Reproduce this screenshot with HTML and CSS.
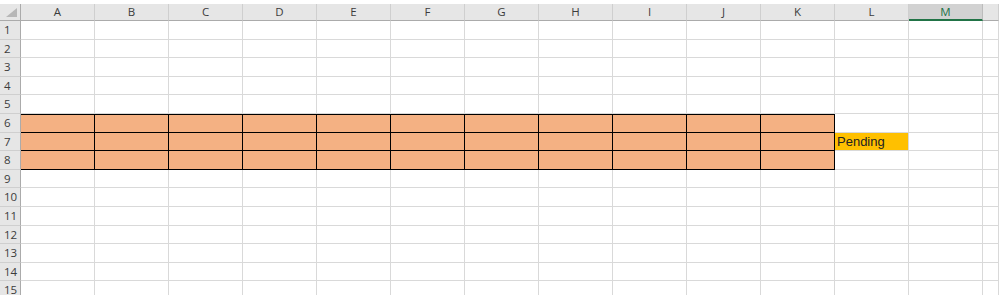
FILE: index.html
```html
<!DOCTYPE html>
<html lang="en">
<head>
    <meta charset="UTF-8">
    <title>Book1 - Excel</title>
    <link rel="stylesheet" href="styles.css">
</head>
<body>

<div id="sheet" class="sheet"></div>

<script>
var sheet = document.getElementById('sheet');
var letters = ['A','B','C','D','E','F','G','H','I','J','K','L','M',''];

// corner + column headers
var corner = document.createElement('div');
corner.className = 'corner';
sheet.appendChild(corner);
for (var c = 0; c < letters.length; c++) {
    var h = document.createElement('div');
    h.className = 'col-head' + (letters[c] === 'M' ? ' selected' : '');
    h.textContent = letters[c];
    sheet.appendChild(h);
}

// rows 1..15
for (var r = 1; r <= 15; r++) {
    var rh = document.createElement('div');
    rh.className = 'row-head';
    rh.textContent = r;
    sheet.appendChild(rh);
    for (var c = 0; c < letters.length; c++) {
        var cell = document.createElement('div');
        cell.className = 'cell';
        if (r >= 6 && r <= 8 && c <= 10) {
            cell.classList.add('fill');
            if (r === 6) cell.classList.add('top');
        }
        if (r === 7 && c === 11) {
            cell.classList.add('pending');
            cell.textContent = 'Pending';
        }
        sheet.appendChild(cell);
    }
}
</script>
</body>
</html>
```

FILE: styles.css
```css
html, body {
    margin: 0;
    padding: 0;
    background: white;
    overflow: hidden;
}

.sheet {
    display: grid;
    grid-template-columns: 21px repeat(13, 74px) 1fr;
    grid-template-rows: 17px repeat(15, 18.6px);
    margin-top: 4px;
    font-family: "Open Sans", "Liberation Sans", Arial, sans-serif;
}

.corner {
    position: relative;
    background: #e6e6e6;
    border-right: 1px solid #ababab;
    border-bottom: 1px solid #ababab;
    box-sizing: border-box;
}

.corner::after {
    content: "";
    position: absolute;
    right: 3px;
    bottom: 3px;
    border-left: 11px solid transparent;
    border-bottom: 9px solid #b7b7b7;
}

.col-head {
    background: #e6e6e6;
    border-right: 1px solid #cfcfcf;
    border-bottom: 1px solid #ababab;
    box-sizing: border-box;
    font-size: 11.5px;
    line-height: 16px;
    color: #3c3c3c;
    text-align: center;
}

.col-head.selected {
    background: #d2d2d2;
    color: #217346;
    border-right-color: #bcbcbc;
    border-bottom: 2px solid #217346;
}

.row-head {
    background: #e6e6e6;
    border-right: 1px solid #ababab;
    border-bottom: 1px solid #cfcfcf;
    box-sizing: border-box;
    font-size: 11.5px;
    line-height: 18px;
    color: #3c3c3c;
    padding-left: 4px;
}

.cell {
    border-right: 1px solid #d9d9d9;
    border-bottom: 1px solid #d9d9d9;
    box-sizing: border-box;
    font-family: "Liberation Sans", Arial, sans-serif;
    font-size: 13px;
    line-height: 18px;
    padding-left: 2px;
    white-space: nowrap;
}

.cell.fill {
    background: #f4b183;
    border-right-color: #000;
    border-bottom-color: #000;
}

.cell.fill.top {
    box-shadow: inset 0 1px 0 #000;
}

.cell.pending {
    background: #ffc000;
    color: #222;
}
```
